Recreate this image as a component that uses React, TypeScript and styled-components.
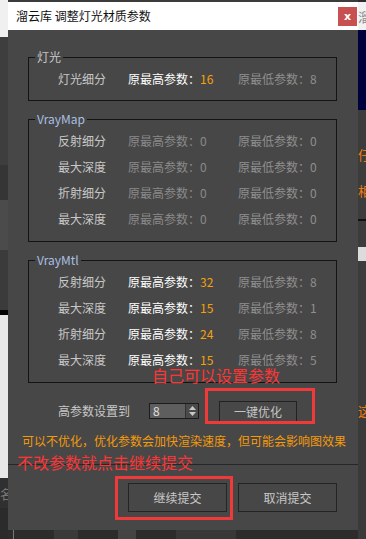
import React from "react";
import styled, { createGlobalStyle } from "styled-components";

const Global = createGlobalStyle`
  html, body { margin: 0; padding: 0; background: #3b3b3b; }
  body { font-family: "Noto Sans CJK SC", "Noto Sans", sans-serif; }
`;

const FONT = `"Noto Sans CJK SC", "Noto Sans", sans-serif`;

const Desktop = styled.div`
  position: relative;
  width: 366px;
  height: 539px;
  overflow: hidden;
  background: #3b3b3b;
`;

/* background windows peeking around the dialog */
const SideStrip = styled.div<{ $side: "left" | "right" }>`
  position: absolute;
  top: 0;
  ${(p) => (p.$side === "left" ? "left: 0;" : "right: 0;")}
  width: 8px;
  height: 539px;
  display: flex;
  flex-direction: column;
  overflow: hidden;
`;

const Seg = styled.div<{ $h: number; $bg: string; $color?: string }>`
  flex: 0 0 ${(p) => p.$h}px;
  background: ${(p) => p.$bg};
  color: ${(p) => p.$color || "#888"};
  font: 13px/1 ${FONT};
  white-space: nowrap;
  overflow: hidden;
  display: flex;
  align-items: center;
`;

const BottomStrip = styled.div`
  position: absolute;
  left: 8px;
  top: 530px;
  width: 350px;
  height: 9px;
  background: #2c2c2c;
  display: flex;
  align-items: flex-start;
  gap: 40px;
  padding-left: 5px;
  box-sizing: border-box;
`;

const Tick = styled.div<{ $w: number; $c: string }>`
  width: ${(p) => p.$w}px;
  height: 9px;
  background: ${(p) => p.$c};
`;

const Dialog = styled.div`
  position: absolute;
  left: 8px;
  top: 2px;
  width: 350px;
  height: 528px;
  background: #474747;
  display: flex;
  flex-direction: column;
`;

const TitleBar = styled.div`
  height: 28px;
  flex: 0 0 28px;
  background: #ffffff;
  display: flex;
  align-items: center;
  justify-content: space-between;
  padding-left: 8px;
`;

const Title = styled.span`
  font: 12px/1 ${FONT};
  color: #111;
`;

const CloseBtn = styled.div`
  width: 19px;
  height: 19px;
  margin-right: 1px;
  background: #c75050;
  color: #fff;
  font: bold 11px/19px "DejaVu Sans", sans-serif;
  text-align: center;
`;

const Body = styled.div`
  display: flex;
  flex-direction: column;
  padding: 27px 21px 0 20px;
`;

const Group = styled.div<{ $rows: number }>`
  position: relative;
  border: 1px solid #141414;
  padding: 8px 0 ${(p) => (p.$rows === 1 ? 8 : 9)}px 29px;
  & + & {
    margin-top: 18px;
  }
`;

const GroupLabel = styled.span<{ $latin?: boolean }>`
  position: absolute;
  top: -9px;
  left: 6px;
  padding: 0 2px;
  background: #474747;
  font: 12px/16px ${FONT};
  color: ${(p) => (p.$latin ? "#a9bfe3" : "#c8c8c8")};
`;

const Row = styled.div`
  display: grid;
  grid-template-columns: 70px 110px 1fr;
  height: 26px;
  align-items: center;
  font: 12px/1 ${FONT};
  white-space: nowrap;
`;

const RowLabel = styled.span`
  color: #c8c8c8;
`;

const High = styled.span<{ $on: boolean }>`
  color: ${(p) => (p.$on ? "#ffffff" : "#8a8a8a")};
`;

const Num = styled.span<{ $on: boolean }>`
  color: ${(p) => (p.$on ? "#f5a00c" : "#8a8a8a")};
`;

const Low = styled.span`
  color: #8f8f8f;
`;

const SetRow = styled.div`
  margin-top: 17px;
  height: 22px;
  display: flex;
  align-items: center;
  padding-left: 30px;
`;

const SetLabel = styled.span`
  font: 12px/1 ${FONT};
  color: #c8c8c8;
  width: 91px;
`;

const Spin = styled.div`
  width: 50px;
  height: 16px;
  box-sizing: border-box;
  display: flex;
  border: 1px solid #1c1c1c;
  background: #5e5e5e;
`;

const SpinInput = styled.span`
  flex: 1;
  font: 12px/14px ${FONT};
  color: #e0e0e0;
  padding-left: 3px;
`;

const SpinArrows = styled.div`
  width: 12px;
  display: flex;
  flex-direction: column;
  align-items: center;
  justify-content: center;
  gap: 2px;
  background: #4a4a4a;
  border-left: 1px solid #333;
`;

const SmallBtn = styled.div`
  margin-left: 20px;
  width: 78px;
  height: 21px;
  box-sizing: border-box;
  border: 1px solid #222;
  background: #484848;
  font: 12px/19px ${FONT};
  color: #c4c4c4;
  text-align: center;
`;

const Note = styled.div`
  margin: 11px 0 0 -6px;
  font: 12px/16px ${FONT};
  color: #f39a0a;
  white-space: nowrap;
`;

const Separator = styled.div`
  margin: 15px -21px 0 -20px;
  height: 1px;
  background: #262626;
`;

const ButtonBar = styled.div`
  display: flex;
  justify-content: flex-end;
  gap: 11px;
  padding-top: 18px;
`;

const BigBtn = styled.div`
  width: 99px;
  height: 29px;
  box-sizing: border-box;
  border: 1px solid #242424;
  background: #474747;
  font: 12px/27px ${FONT};
  color: #c8c8c8;
  text-align: center;
`;

const Mark = styled.div<{ $x: number; $y: number; $w: number; $h: number }>`
  position: absolute;
  left: ${(p) => p.$x}px;
  top: ${(p) => p.$y}px;
  width: ${(p) => p.$w}px;
  height: ${(p) => p.$h}px;
  box-sizing: border-box;
  border: 3px solid #f03a3a;
`;

const Callout = styled.div<{ $x: number; $y: number }>`
  position: absolute;
  left: ${(p) => p.$x}px;
  top: ${(p) => p.$y}px;
  font: 16px/20px ${FONT};
  color: #ff3535;
  white-space: nowrap;
`;

type R = { label: string; high: string; low: string };

const mapRows: R[] = [
  { label: "反射细分", high: "0", low: "0" },
  { label: "最大深度", high: "0", low: "0" },
  { label: "折射细分", high: "0", low: "0" },
  { label: "最大深度", high: "0", low: "0" },
];

const mtlRows: R[] = [
  { label: "反射细分", high: "32", low: "8" },
  { label: "最大深度", high: "15", low: "1" },
  { label: "折射细分", high: "24", low: "8" },
  { label: "最大深度", high: "15", low: "5" },
];

const ParamRow = ({ r, on }: { r: R; on: boolean }) => (
  <Row>
    <RowLabel>{r.label}</RowLabel>
    <span>
      <High $on={on}>原最高参数：</High>
      <Num $on={on}>{r.high}</Num>
    </span>
    <Low>原最低参数：{r.low}</Low>
  </Row>
);

const Tri = ({ up }: { up: boolean }) => (
  <svg width="7" height="4" viewBox="0 0 7 4">
    <path d={up ? "M0 4 L3.5 0 L7 4 Z" : "M0 0 L3.5 4 L7 0 Z"} fill="#c8c8c8" />
  </svg>
);

export default function App() {
  return (
    <Desktop>
      <Global />
      <SideStrip $side="left">
        <Seg $h={37} $bg="#f0f0f0" />
        <Seg $h={128} $bg="#3e3e3e" />
        <Seg $h={35} $bg="#353535" />
        <Seg $h={50} $bg="#4b4b4b" />
        <Seg $h={60} $bg="#3b3b3b" />
        <Seg $h={5} $bg="#050505" />
        <Seg $h={163} $bg="#e8e8e8" />
        <Seg $h={30} $bg="#303030" $color="#777">名</Seg>
        <Seg $h={31} $bg="#2b2b2b" />
      </SideStrip>
      <SideStrip $side="right">
        <Seg $h={2} $bg="#2d2d2d" />
        <Seg $h={28} $bg="#f2f2f2" $color="#8a8a8a">溜</Seg>
        <Seg $h={80} $bg="#00003c" />
        <Seg $h={33} $bg="#3c3c3c" />
        <Seg $h={22} $bg="#3c3c3c" $color="#f07a10">仔</Seg>
        <Seg $h={14} $bg="#3c3c3c" />
        <Seg $h={22} $bg="#3c3c3c" $color="#f07a10">相</Seg>
        <Seg $h={18} $bg="#3c3c3c" />
        <Seg $h={2} $bg="#111" />
        <Seg $h={26} $bg="#3c3c3c" />
        <Seg $h={14} $bg="#dcdcdc" />
        <Seg $h={140} $bg="#3c3c3c" />
        <Seg $h={18} $bg="#3c3c3c" $color="#f07a10">这</Seg>
        <Seg $h={120} $bg="#3a3a3a" />
      </SideStrip>
      <BottomStrip>
        <Tick $w={1} $c="#777" />
        <Tick $w={24} $c="#3a3a3a" />
        <Tick $w={18} $c="#444" />
        <Tick $w={60} $c="#383838" />
      </BottomStrip>

      <Dialog>
        <TitleBar>
          <Title>溜云库 调整灯光材质参数</Title>
          <CloseBtn>x</CloseBtn>
        </TitleBar>
        <Body>
          <Group $rows={1}>
            <GroupLabel>灯光</GroupLabel>
            <ParamRow r={{ label: "灯光细分", high: "16", low: "8" }} on />
          </Group>
          <Group $rows={4}>
            <GroupLabel $latin>VrayMap</GroupLabel>
            {mapRows.map((r, i) => (
              <ParamRow key={i} r={r} on={false} />
            ))}
          </Group>
          <Group $rows={4}>
            <GroupLabel $latin>VrayMtl</GroupLabel>
            {mtlRows.map((r, i) => (
              <ParamRow key={i} r={r} on />
            ))}
          </Group>
          <SetRow>
            <SetLabel>高参数设置到</SetLabel>
            <Spin>
              <SpinInput>8</SpinInput>
              <SpinArrows>
                <Tri up />
                <Tri up={false} />
              </SpinArrows>
            </Spin>
            <SmallBtn>一键优化</SmallBtn>
          </SetRow>
          <Note>可以不优化，优化参数会加快渲染速度，但可能会影响图效果</Note>
          <Separator />
          <ButtonBar>
            <BigBtn>继续提交</BigBtn>
            <BigBtn>取消提交</BigBtn>
          </ButtonBar>
        </Body>
      </Dialog>

      <Callout $x={152} $y={365}>自己可以设置参数</Callout>
      <Mark $x={205} $y={388} $w={110} $h={36} />
      <Callout $x={17} $y={452}>不改参数就点击继续提交</Callout>
      <Mark $x={115} $y={476} $w={118} $h={44} />
    </Desktop>
  );
}
